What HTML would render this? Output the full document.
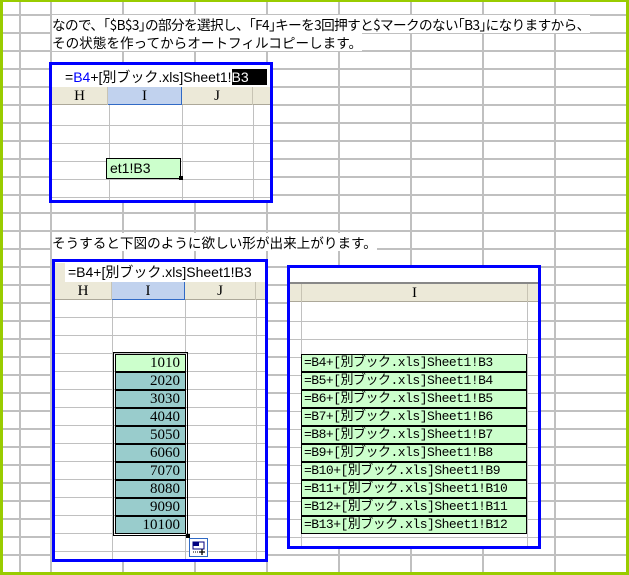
<!DOCTYPE html>
<html><head><meta charset="utf-8"><style>
*{margin:0;padding:0;box-sizing:border-box}
body{width:629px;height:575px;overflow:hidden;position:relative;background:#fff;font-family:"Liberation Sans","Noto Sans CJK JP",sans-serif}
.bg2{position:absolute;left:0;top:0;width:629px;height:575px;
background-image:linear-gradient(to right,transparent 19px,#c0c0c0 19px,#c0c0c0 21px,transparent 21px),
repeating-linear-gradient(to right,transparent 0,transparent 50px,#c0c0c0 50px,#c0c0c0 52px,transparent 52px,transparent 72px),
repeating-linear-gradient(to bottom,transparent 0,transparent 14px,#c0c0c0 14px,#c0c0c0 16px,transparent 16px,transparent 18px);}
.frame{position:absolute;left:0;top:0;width:629px;height:575px;border-left:3px solid #99cc00;border-top:2px solid #99cc00;border-right:3px solid #99cc00;border-bottom:3px solid #99cc00}
.t{position:absolute;left:52px;font-size:13.6px;white-space:nowrap;line-height:18px;background:#fff;color:#000;font-family:"Noto Sans CJK JP",sans-serif}
.box{position:absolute;border:3px solid #0000ff;background:#fff;overflow:hidden}
.abs{position:absolute}
.fb{position:absolute;background:#fff;font-size:14px;line-height:18px;white-space:nowrap}
.hdr{position:absolute;background:#ece9d8;border-bottom:1px solid #aca899;height:18px;font-family:"Liberation Serif",serif;font-size:15px;text-align:center;line-height:18px}
.hc{position:absolute;top:0;height:18px;border-right:1px solid #c8c4b4}
.grid{position:absolute;background-image:repeating-linear-gradient(to bottom,transparent 0,transparent 17px,#c0c0c0 17px,#c0c0c0 18px)}
.vl{position:absolute;width:1px;background:#c0c0c0}
.num{position:absolute;height:18px;border:1px solid #000;background:#99cccc;text-align:right;padding-right:5px;font-family:"Liberation Serif",serif;font-size:15px;line-height:16px}
.fr{position:absolute;left:0;width:226px;height:18px;border:1px solid #000;background:#ccffcc;font-family:"Liberation Mono","Noto Sans CJK JP",monospace;font-size:13px;line-height:16px;padding-left:2px;white-space:nowrap;letter-spacing:-0.5px}
</style></head><body>
<div class="bg2"></div>
<div class="frame"></div>
<div class="t" style="top:15px;letter-spacing:-0.6px">なので、｢$B$3｣の部分を選択し、｢F4｣キーを3回押すと$マークのない｢B3｣になりますから、</div>
<div class="t" style="top:33px">その状態を作ってからオートフィルコピーします。</div>
<div class="t" style="top:233px">そうすると下図のように欲しい形が出来上がります。</div>

<!-- box1 -->
<div class="box" style="left:49px;top:62px;width:224px;height:141px">
 <div class="grid" style="left:0;top:43px;width:220px;height:94px"></div>
 <div class="vl" style="left:57px;top:25px;height:120px"></div>
 <div class="vl" style="left:130px;top:25px;height:120px"></div>
 <div class="vl" style="left:201px;top:25px;height:120px"></div>
 <div class="fb" style="left:5px;top:3px;width:215px;height:19px;padding-left:8px">=<span style="color:#0000ff">B4</span>+[別ブック.xls]Sheet1!<span style="background:#000;color:#fff;padding-right:18px">B3</span></div>
 <div class="hdr" style="left:0;top:22px;width:220px">
  <div class="hc" style="left:0;width:56px">H</div>
  <div class="hc" style="left:56px;width:74px;background:#c1d2ee;border-right:1px solid #316ac5;border-bottom:1px solid #316ac5">I</div>
  <div class="hc" style="left:130px;width:71px">J</div>
 </div>
 <div class="abs" style="left:54px;top:93px;width:75px;height:21px;border:1px solid #000;background:#ccffcc;font-size:14px;line-height:19px;padding-left:3px">et1!B3</div>
 <div class="abs" style="left:127px;top:111px;width:4px;height:4px;background:#000"></div>
</div>

<!-- box2 -->
<div class="box" style="left:52px;top:259px;width:216px;height:303px">
 <div class="grid" style="left:0;top:38px;width:212px;height:262px"></div>
 <div class="vl" style="left:57px;top:20px;height:280px"></div>
 <div class="vl" style="left:130px;top:20px;height:280px"></div>
 <div class="vl" style="left:201px;top:20px;height:280px"></div>
 <div class="fb" style="left:10px;top:1px;width:205px;height:19px;padding-left:3px">=B4+[別ブック.xls]Sheet1!B3</div>
 <div class="abs" style="left:0;top:1px;width:10px;height:19px;background:#ece9d8"></div>
 <div class="hdr" style="left:0;top:20px;width:212px">
  <div class="hc" style="left:0;width:57px">H</div>
  <div class="hc" style="left:57px;width:73px;background:#c1d2ee;border-right:1px solid #316ac5;border-bottom:1px solid #316ac5">I</div>
  <div class="hc" style="left:130px;width:71px">J</div>
 </div>
 <div class="abs" style="left:58px;top:90px;width:75px;height:184px;border:1px solid #000"></div>
 <div class="num" style="left:60px;top:92px;width:71px;background:#ccffcc">1010</div>
 <div class="num" style="left:60px;top:110px;width:71px">2020</div>
 <div class="num" style="left:60px;top:128px;width:71px">3030</div>
 <div class="num" style="left:60px;top:146px;width:71px">4040</div>
 <div class="num" style="left:60px;top:164px;width:71px">5050</div>
 <div class="num" style="left:60px;top:182px;width:71px">6060</div>
 <div class="num" style="left:60px;top:200px;width:71px">7070</div>
 <div class="num" style="left:60px;top:218px;width:71px">8080</div>
 <div class="num" style="left:60px;top:236px;width:71px">9090</div>
 <div class="num" style="left:60px;top:254px;width:71px">10100</div>
 <div class="abs" style="left:131px;top:272px;width:4px;height:4px;background:#000"></div>
 <div class="abs" style="left:134px;top:276px;width:19px;height:19px;border:1px solid #316ac5;background:#fff">
  <svg width="17" height="17" viewBox="0 0 17 17" style="position:absolute;left:0;top:0"><rect x="3" y="3" width="6" height="4" fill="#000080"/><rect x="3" y="3" width="11" height="7" fill="none" stroke="#000080" stroke-width="1"/><path d="M3 13h1M5 13h1M7 13h1" stroke="#000"/><path d="M12 10v6M9 13h6" stroke="#000" stroke-width="1.3"/></svg>
 </div>
</div>

<!-- box3 -->
<div class="box" style="left:287px;top:265px;width:254px;height:284px">
 <div class="grid" style="left:0;top:36px;width:250px;height:250px"></div>
 <div class="vl" style="left:11px;top:17px;height:270px"></div>
 <div class="vl" style="left:237px;top:17px;height:270px"></div>
 <div class="hdr" style="left:0;top:14px;width:250px;border-top:2px solid #888;height:20px">
  <div class="hc" style="left:0;width:12px"></div>
  <div class="hc" style="left:12px;width:226px">I</div>
 </div>
 <div class="abs" style="left:11px;top:86px">
  <div class="fr" style="top:0">=B4+[別ブック.xls]Sheet1!B3</div>
  <div class="fr" style="top:18px">=B5+[別ブック.xls]Sheet1!B4</div>
  <div class="fr" style="top:36px">=B6+[別ブック.xls]Sheet1!B5</div>
  <div class="fr" style="top:54px">=B7+[別ブック.xls]Sheet1!B6</div>
  <div class="fr" style="top:72px">=B8+[別ブック.xls]Sheet1!B7</div>
  <div class="fr" style="top:90px">=B9+[別ブック.xls]Sheet1!B8</div>
  <div class="fr" style="top:108px">=B10+[別ブック.xls]Sheet1!B9</div>
  <div class="fr" style="top:126px">=B11+[別ブック.xls]Sheet1!B10</div>
  <div class="fr" style="top:144px">=B12+[別ブック.xls]Sheet1!B11</div>
  <div class="fr" style="top:162px">=B13+[別ブック.xls]Sheet1!B12</div>
 </div>
</div>
</body></html>
